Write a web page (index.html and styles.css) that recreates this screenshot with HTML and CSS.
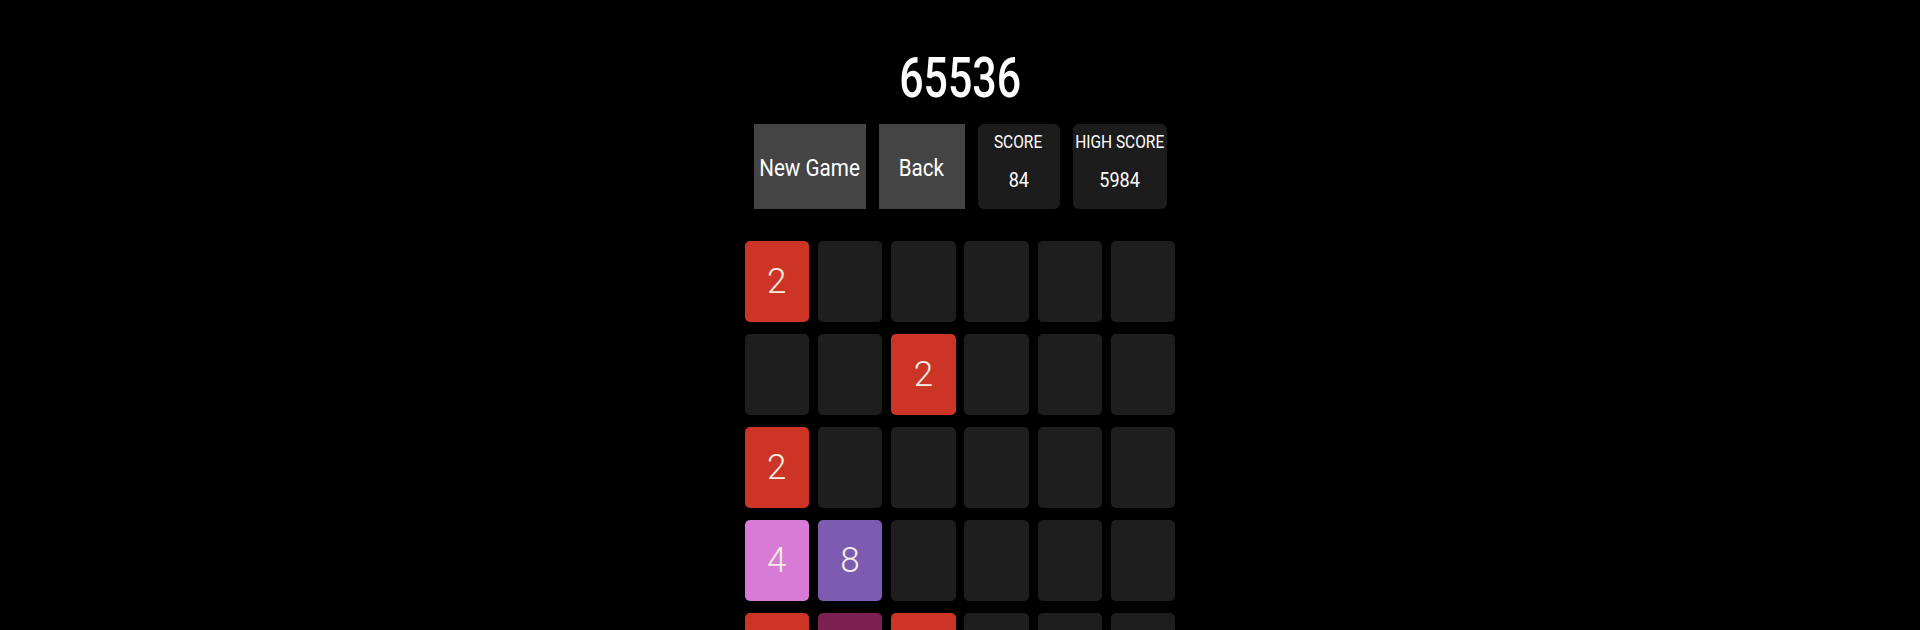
FILE: index.html
```html
<!DOCTYPE html>
<html>
<head>
<meta charset="utf-8">
<link rel="stylesheet" href="styles.css">
</head>
<body>
<div class="app">
  <h1 class="title"><span class="title-text">65536</span></h1>
  <div class="controls">
    <div class="btn btn-new"><span class="narrow">New Game</span></div>
    <div class="btn btn-back"><span class="narrow">Back</span></div>
    <div class="stat stat-score"><span class="stat-label narrow">SCORE</span><span class="stat-value narrow">84</span></div>
    <div class="stat stat-high"><span class="stat-label narrow">HIGH SCORE</span><span class="stat-value narrow">5984</span></div>
  </div>
  <div class="board">
    <div class="tile t2">2</div><div class="tile"></div><div class="tile"></div><div class="tile"></div><div class="tile"></div><div class="tile"></div>
    <div class="tile"></div><div class="tile"></div><div class="tile t2">2</div><div class="tile"></div><div class="tile"></div><div class="tile"></div>
    <div class="tile t2">2</div><div class="tile"></div><div class="tile"></div><div class="tile"></div><div class="tile"></div><div class="tile"></div>
    <div class="tile t4">4</div><div class="tile t8">8</div><div class="tile"></div><div class="tile"></div><div class="tile"></div><div class="tile"></div>
    <div class="tile t2"></div><div class="tile t16"></div><div class="tile t2"></div><div class="tile"></div><div class="tile"></div><div class="tile"></div>
  </div>
</div>
</body>
</html>
```
FILE: styles.css
```css
html, body {
  margin: 0;
  padding: 0;
  background: #000;
  height: 630px;
  overflow: hidden;
}
body {
  font-family: "Roboto", "Liberation Sans", sans-serif;
  color: #fff;
}
.app {
  display: flex;
  flex-direction: column;
  align-items: center;
  padding-top: 51px;
}
.title {
  margin: 0;
  font-size: 55px;
  line-height: 54px;
  font-weight: 500;
  color: #fff;
}
.title-text {
  display: inline-block;
  transform: scaleX(0.78);
}
.narrow {
  display: inline-block;
  white-space: nowrap;
  transform: scaleX(0.86);
}
.controls {
  display: flex;
  gap: 13px;
  margin-top: 19px;
  height: 85px;
}
.btn {
  background: #444444;
  display: flex;
  align-items: center;
  justify-content: center;
  font-size: 24px;
  color: #fff;
  padding-top: 2px;
  box-sizing: border-box;
}
.btn-new { width: 112px; }
.btn-back { width: 86px; }
.stat {
  background: #1c1c1c;
  border-radius: 6px;
  display: flex;
  flex-direction: column;
  align-items: center;
  box-sizing: border-box;
  padding-top: 8px;
}
.stat-score { width: 82px; }
.stat-high { width: 94px; }
.stat-label {
  font-size: 18px;
  line-height: 20px;
}
.stat-value {
  font-size: 21px;
  line-height: 24px;
  margin-top: 16px;
}
.board {
  display: grid;
  grid-template-columns: repeat(6, 64.5px);
  grid-auto-rows: 81px;
  column-gap: 8.8px;
  row-gap: 12px;
  margin-top: 32px;
}
.tile {
  background: #1e1e1e;
  border-radius: 5px;
  display: flex;
  align-items: center;
  justify-content: center;
  font-family: "Roboto", "Liberation Sans", sans-serif;
  font-weight: 300;
  font-size: 35px;
  color: #f6ede2;
}
.t2 { background: #cc3526; }
.t4 { background: #d87bd6; }
.t8 { background: #7c5bb1; }
.t16 { background: #7d1f51; }
```
